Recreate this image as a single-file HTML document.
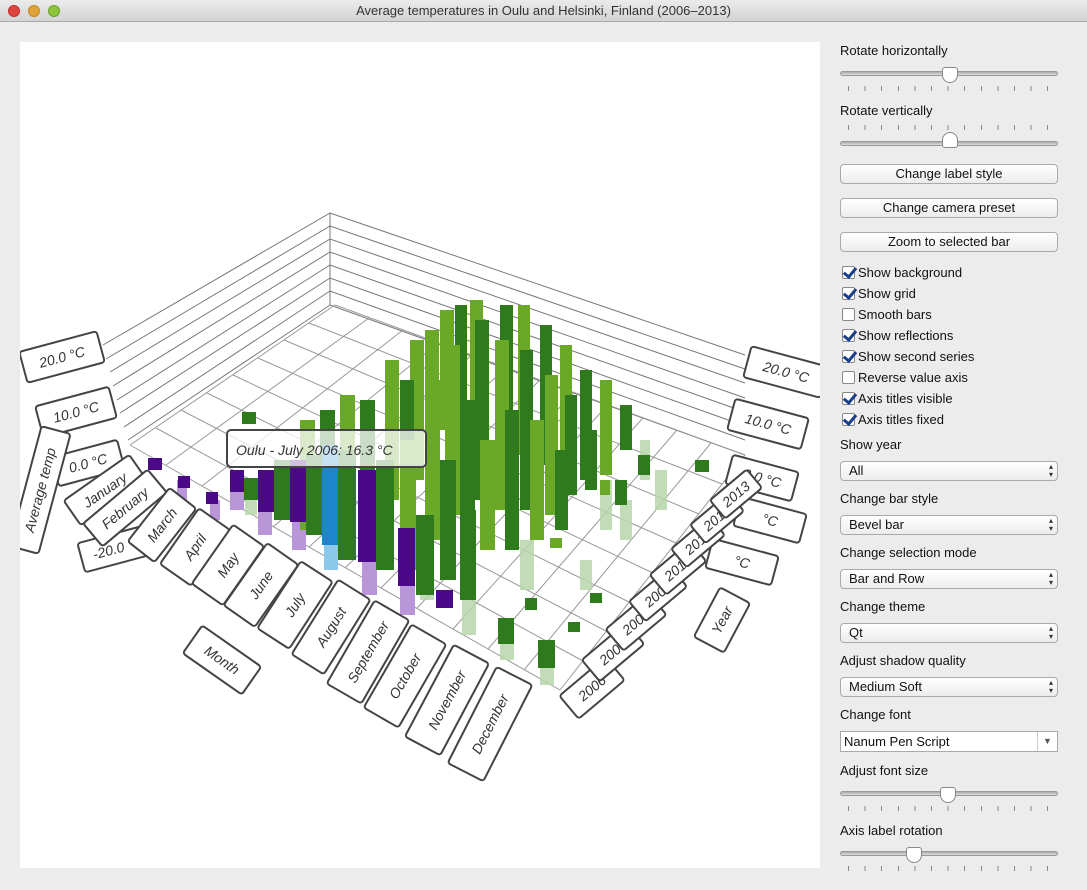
<!DOCTYPE html>
<html><head><meta charset="utf-8"><style>
*{margin:0;padding:0;box-sizing:border-box}
body{width:1087px;height:890px;background:#ececec;font-family:"Liberation Sans",sans-serif;position:relative;overflow:hidden;font-size:13px;color:#111}
.title{position:absolute;left:0;top:0;width:1087px;height:22px;background:linear-gradient(#ebebeb,#d3d3d3);border-bottom:1px solid #a9a9a9;text-align:center;line-height:22px;font-size:13px;color:#333}
.tl{position:absolute;top:5px;width:12px;height:12px;border-radius:50%}
.chart{position:absolute;left:20px;top:42px;width:800px;height:826px;background:#fff;overflow:hidden}
.lbl{position:absolute;left:840px;font-size:13px}
.slider{position:absolute;left:840px;width:218px;height:5px;border-radius:3px;background:linear-gradient(#aaa,#ddd);border:1px solid #999}
.ticks{position:absolute;left:848px;width:204px;height:5px;background:repeating-linear-gradient(90deg,#888 0 1px,transparent 1px 16.6px)}
.btn{position:absolute;left:840px;width:218px;height:20px;border:1px solid #aaa;border-radius:4px;background:linear-gradient(#fff,#ececec);text-align:center;line-height:18px;font-size:13px}
.cb{position:absolute;left:842px;font-size:13px;line-height:15px}
.cb i{display:inline-block;width:13px;height:13px;border:1px solid #888;border-radius:2px;background:#fff;vertical-align:-2px;margin-right:3px;position:relative}
.cb i.on::after{content:"";position:absolute;left:3px;top:-2px;width:5px;height:10px;border:solid #1a3f8a;border-width:0 3px 3px 0;transform:rotate(40deg)}
.sel{position:absolute;left:840px;width:218px;height:20px;border:1px solid #aaa;border-radius:4px;background:linear-gradient(#fff,#ececec);line-height:18px;padding-left:8px;font-size:13px}
.sel::after{content:"▴\A▾";white-space:pre;position:absolute;right:4px;top:1px;font-size:8px;line-height:8px;color:#333}
.hand{font-family:"Liberation Sans",sans-serif;font-style:italic;font-size:14px;fill:#333}
.L rect{fill:#fff;stroke:#444;stroke-width:2}
.L text{font-family:"Liberation Sans",sans-serif;font-style:italic;font-size:14px;fill:#333;text-anchor:middle;dominant-baseline:central}
</style></head><body>
<div class="title">Average temperatures in Oulu and Helsinki, Finland (2006–2013)</div>
<div class="tl" style="left:8px;background:#e0443e;border:1px solid #c0302a"></div>
<div class="tl" style="left:28px;background:#dea236;border:1px solid #c08a20"></div>
<div class="tl" style="left:48px;background:#8cc43a;border:1px solid #6aa02a"></div>

<div class="chart">
<svg width="800" height="826" viewBox="20 42 800 826" xmlns="http://www.w3.org/2000/svg">
<g stroke="#777" stroke-width="1" fill="none">
<path d="M103 345L330 213L745 355M106 359L330 226L745 369M110 372L330 239L745 383M113 386L330 252L745 398M117 400L330 265L745 412M120 413L330 278L745 426M124 427L330 291L745 440M128 440L330 305L745 455"/>
<path d="M330 213V305"/>
</g>
<g stroke="#999" stroke-width="1" fill="none">
<path d="M130 445L335 305M166 465L369 318M202 486L403 330M238 506L438 343M273 527L472 355M309 547L506 368M345 568L540 380M381 588L574 393M417 608L608 405M453 629L643 418M488 649L677 430M524 670L711 443M560 690L745 455"/>
<path d="M130 445L560 690M156 428L583 661M181 410L606 631M207 393L629 602M233 375L653 573M258 358L676 543M284 340L699 514M309 323L722 484M335 305L745 455"/>
</g>
<g fill="#b9d6ac" opacity="0.85">
<rect x="462" y="590" width="14" height="45"/><rect x="500" y="620" width="14" height="40"/><rect x="540" y="640" width="14" height="45"/>
<rect x="580" y="560" width="12" height="30"/><rect x="620" y="500" width="12" height="40"/><rect x="655" y="470" width="12" height="40"/>
<rect x="245" y="490" width="12" height="25"/><rect x="420" y="560" width="14" height="40"/><rect x="520" y="540" width="14" height="50"/>
<rect x="600" y="480" width="12" height="50"/><rect x="640" y="440" width="10" height="40"/>
</g>
<g fill="#b896d8"><rect x="230" y="490" width="14" height="20"/><rect x="258" y="510" width="14" height="25"/><rect x="292" y="520" width="14" height="30"/><rect x="362" y="560" width="15" height="35"/><rect x="400" y="585" width="15" height="30"/><rect x="177" y="480" width="10" height="30"/><rect x="210" y="500" width="10" height="20"/></g>
<rect x="324" y="545" width="14" height="25" fill="#8cc8ea"/>
<g>
<rect x="440" y="310" width="14" height="120" fill="#6aa828"/><rect x="455" y="305" width="12" height="130" fill="#2e7a1c"/>
<rect x="470" y="300" width="13" height="150" fill="#6aa828"/><rect x="500" y="305" width="13" height="150" fill="#2e7a1c"/>
<rect x="518" y="305" width="12" height="150" fill="#6aa828"/><rect x="540" y="325" width="12" height="140" fill="#2e7a1c"/>
<rect x="560" y="345" width="12" height="130" fill="#6aa828"/><rect x="580" y="370" width="12" height="110" fill="#2e7a1c"/>
<rect x="600" y="380" width="12" height="95" fill="#6aa828"/><rect x="620" y="405" width="12" height="45" fill="#2e7a1c"/>
<rect x="410" y="340" width="14" height="140" fill="#6aa828"/><rect x="425" y="330" width="14" height="150" fill="#6aa828"/>
<rect x="445" y="345" width="15" height="170" fill="#6aa828"/><rect x="475" y="320" width="14" height="180" fill="#2e7a1c"/>
<rect x="495" y="340" width="14" height="170" fill="#6aa828"/><rect x="520" y="350" width="13" height="160" fill="#2e7a1c"/>
<rect x="545" y="375" width="13" height="140" fill="#6aa828"/><rect x="565" y="395" width="12" height="100" fill="#2e7a1c"/>
<rect x="385" y="360" width="14" height="140" fill="#6aa828"/><rect x="400" y="380" width="14" height="140" fill="#2e7a1c"/>
<rect x="425" y="380" width="15" height="160" fill="#6aa828"/><rect x="460" y="400" width="15" height="150" fill="#2e7a1c"/>
<rect x="480" y="440" width="15" height="110" fill="#6aa828"/><rect x="505" y="410" width="14" height="140" fill="#2e7a1c"/>
<rect x="530" y="420" width="14" height="120" fill="#6aa828"/><rect x="555" y="450" width="13" height="80" fill="#2e7a1c"/>
<rect x="340" y="395" width="15" height="140" fill="#6aa828"/><rect x="360" y="400" width="15" height="140" fill="#2e7a1c"/>
<rect x="300" y="420" width="15" height="110" fill="#6aa828"/><rect x="320" y="410" width="15" height="120" fill="#2e7a1c"/>
<rect x="400" y="440" width="16" height="130" fill="#6aa828"/><rect x="440" y="460" width="16" height="120" fill="#2e7a1c"/>
<rect x="585" y="430" width="12" height="60" fill="#2e7a1c"/><rect x="615" y="480" width="12" height="25" fill="#2e7a1c"/>
<rect x="638" y="455" width="12" height="20" fill="#2e7a1c"/><rect x="695" y="460" width="14" height="12" fill="#2e7a1c"/>
<rect x="600" y="480" width="10" height="15" fill="#6aa828"/><rect x="550" y="538" width="12" height="10" fill="#6aa828"/>
<rect x="590" y="593" width="12" height="10" fill="#2e7a1c"/><rect x="568" y="622" width="12" height="10" fill="#2e7a1c"/>
<rect x="525" y="598" width="12" height="12" fill="#2e7a1c"/><rect x="242" y="412" width="14" height="12" fill="#2e7a1c"/>
</g>
<g>
<rect x="230" y="470" width="14" height="22" fill="#4a0a88"/><rect x="244" y="478" width="14" height="22" fill="#2e7a1c"/>
<rect x="258" y="470" width="16" height="42" fill="#4a0a88"/><rect x="274" y="460" width="16" height="60" fill="#2e7a1c"/>
<rect x="290" y="460" width="16" height="62" fill="#4a0a88"/><rect x="306" y="455" width="16" height="80" fill="#2e7a1c"/>
<rect x="322" y="445" width="16" height="100" fill="#1b86cc"/><rect x="338" y="450" width="18" height="110" fill="#2e7a1c"/>
<rect x="358" y="470" width="18" height="92" fill="#4a0a88"/><rect x="376" y="460" width="18" height="110" fill="#2e7a1c"/>
<rect x="398" y="528" width="17" height="58" fill="#4a0a88"/><rect x="416" y="515" width="18" height="80" fill="#2e7a1c"/>
<rect x="436" y="590" width="17" height="18" fill="#4a0a88"/><rect x="460" y="510" width="16" height="90" fill="#2e7a1c"/>
<rect x="498" y="618" width="16" height="26" fill="#2e7a1c"/><rect x="538" y="640" width="17" height="28" fill="#2e7a1c"/>
<rect x="148" y="458" width="14" height="12" fill="#4a0a88"/><rect x="178" y="476" width="12" height="12" fill="#4a0a88"/><rect x="206" y="492" width="12" height="12" fill="#4a0a88"/>
</g>
<rect x="227" y="430" width="199" height="37" rx="4" fill="#fff" fill-opacity="0.75" stroke="#444" stroke-width="2"/>
<text x="236" y="455" class="hand" font-size="15">Oulu - July 2006: 16.3 °C</text>
<g class="L">
<g transform="translate(62,357) rotate(-15)"><rect x="-40" y="-16" width="80" height="32" rx="3"/><text>20.0 °C</text></g>
<g transform="translate(76,412) rotate(-15)"><rect x="-38" y="-16" width="76" height="32" rx="3"/><text>10.0 °C</text></g>
<g transform="translate(88,463) rotate(-15)"><rect x="-34" y="-15" width="68" height="30" rx="3"/><text>0.0 °C</text></g>
<g transform="translate(118,548) rotate(-15)"><rect x="-38" y="-15" width="76" height="30" rx="3"/><text>-20.0 °C</text></g>
<g transform="translate(786,372) rotate(15)"><rect x="-40" y="-16" width="80" height="32" rx="3"/><text>20.0 °C</text></g>
<g transform="translate(768,424) rotate(15)"><rect x="-38" y="-16" width="76" height="32" rx="3"/><text>10.0 °C</text></g>
<g transform="translate(762,478) rotate(15)"><rect x="-34" y="-15" width="68" height="30" rx="3"/><text>0.0 °C</text></g>
<g transform="translate(770,520) rotate(15)"><rect x="-34" y="-15" width="68" height="30" rx="3"/><text>°C</text></g>
<g transform="translate(742,562) rotate(15)"><rect x="-34" y="-15" width="68" height="30" rx="3"/><text>°C</text></g>
<g transform="translate(40,490) rotate(-75)"><rect x="-62" y="-15" width="124" height="30" rx="3"/><text>Average temp</text></g>
<g transform="translate(105,490) rotate(-35)"><rect x="-40" y="-15" width="80" height="30" rx="3"/><text>January</text></g>
<g transform="translate(125,508) rotate(-40)"><rect x="-42" y="-15" width="84" height="30" rx="3"/><text>February</text></g>
<g transform="translate(162,525) rotate(-52)"><rect x="-34" y="-17" width="68" height="34" rx="3"/><text>March</text></g>
<g transform="translate(195,547) rotate(-55)"><rect x="-34" y="-19" width="68" height="38" rx="3"/><text>April</text></g>
<g transform="translate(228,565) rotate(-55)"><rect x="-36" y="-19" width="72" height="38" rx="3"/><text>May</text></g>
<g transform="translate(261,585) rotate(-55)"><rect x="-38" y="-19" width="76" height="38" rx="3"/><text>June</text></g>
<g transform="translate(295,605) rotate(-57)"><rect x="-40" y="-19" width="80" height="38" rx="3"/><text>July</text></g>
<g transform="translate(331,627) rotate(-58)"><rect x="-44" y="-19" width="88" height="38" rx="3"/><text>August</text></g>
<g transform="translate(368,652) rotate(-60)"><rect x="-48" y="-20" width="96" height="40" rx="3"/><text>September</text></g>
<g transform="translate(405,676) rotate(-60)"><rect x="-48" y="-20" width="96" height="40" rx="3"/><text>October</text></g>
<g transform="translate(447,700) rotate(-62)"><rect x="-52" y="-20" width="104" height="40" rx="3"/><text>November</text></g>
<g transform="translate(490,724) rotate(-63)"><rect x="-54" y="-20" width="108" height="40" rx="3"/><text>December</text></g>
<g transform="translate(222,660) rotate(35)"><rect x="-36" y="-17" width="72" height="34" rx="3"/><text>Month</text></g>
<g transform="translate(592,688) rotate(-40)"><rect x="-30" y="-15" width="60" height="30" rx="3"/><text>2006</text></g>
<g transform="translate(613,652) rotate(-40)"><rect x="-29" y="-14" width="58" height="28" rx="3"/><text>2007</text></g>
<g transform="translate(636,622) rotate(-40)"><rect x="-28" y="-14" width="56" height="28" rx="3"/><text>2008</text></g>
<g transform="translate(658,594) rotate(-40)"><rect x="-27" y="-13" width="54" height="26" rx="3"/><text>2009</text></g>
<g transform="translate(678,568) rotate(-40)"><rect x="-26" y="-13" width="52" height="26" rx="3"/><text>2010</text></g>
<g transform="translate(698,542) rotate(-40)"><rect x="-25" y="-12" width="50" height="24" rx="3"/><text>2011</text></g>
<g transform="translate(717,518) rotate(-40)"><rect x="-25" y="-12" width="50" height="24" rx="3"/><text>2012</text></g>
<g transform="translate(736,494) rotate(-40)"><rect x="-24" y="-12" width="48" height="24" rx="3"/><text>2013</text></g>
<g transform="translate(722,620) rotate(-62)"><rect x="-28" y="-17" width="56" height="34" rx="3"/><text>Year</text></g>
</g>
</svg>
</div>

<div class="lbl" style="top:43px">Rotate horizontally</div>
<div class="slider" style="top:71px"></div>
<div class="ticks" style="top:86px"></div>
<div style="position:absolute;left:942px;top:67px;width:16px;height:16px;background:#fff;border:1px solid #888;border-radius:3px 3px 8px 8px"></div>
<div class="lbl" style="top:103px">Rotate vertically</div>
<div class="ticks" style="top:125px"></div>
<div class="slider" style="top:141px"></div>
<div style="position:absolute;left:942px;top:132px;width:16px;height:16px;background:#fff;border:1px solid #888;border-radius:8px 8px 3px 3px"></div>
<div class="btn" style="top:164px">Change label style</div>
<div class="btn" style="top:198px">Change camera preset</div>
<div class="btn" style="top:232px">Zoom to selected bar</div>
<div class="cb" style="top:265px"><i class="on"></i>Show background</div>
<div class="cb" style="top:286px"><i class="on"></i>Show grid</div>
<div class="cb" style="top:307px"><i></i>Smooth bars</div>
<div class="cb" style="top:328px"><i class="on"></i>Show reflections</div>
<div class="cb" style="top:349px"><i class="on"></i>Show second series</div>
<div class="cb" style="top:370px"><i></i>Reverse value axis</div>
<div class="cb" style="top:391px"><i class="on"></i>Axis titles visible</div>
<div class="cb" style="top:412px"><i class="on"></i>Axis titles fixed</div>
<div class="lbl" style="top:437px">Show year</div>
<div class="sel" style="top:461px">All</div>
<div class="lbl" style="top:491px">Change bar style</div>
<div class="sel" style="top:515px">Bevel bar</div>
<div class="lbl" style="top:545px">Change selection mode</div>
<div class="sel" style="top:569px">Bar and Row</div>
<div class="lbl" style="top:599px">Change theme</div>
<div class="sel" style="top:623px">Qt</div>
<div class="lbl" style="top:653px">Adjust shadow quality</div>
<div class="sel" style="top:677px">Medium Soft</div>
<div class="lbl" style="top:707px">Change font</div>
<div style="position:absolute;left:840px;top:731px;width:218px;height:21px;background:#fff;border:1px solid #aaa;line-height:19px;padding-left:3px">Nanum Pen Script<span style="position:absolute;right:0;top:0;width:20px;height:19px;border-left:1px solid #ccc;text-align:center;font-size:9px;color:#555">▼</span></div>
<div class="lbl" style="top:763px">Adjust font size</div>
<div class="slider" style="top:791px"></div>
<div class="ticks" style="top:806px"></div>
<div style="position:absolute;left:940px;top:787px;width:16px;height:16px;background:#fff;border:1px solid #888;border-radius:3px 3px 8px 8px"></div>
<div class="lbl" style="top:823px">Axis label rotation</div>
<div class="slider" style="top:851px"></div>
<div class="ticks" style="top:866px"></div>
<div style="position:absolute;left:906px;top:847px;width:16px;height:16px;background:#fff;border:1px solid #888;border-radius:3px 3px 8px 8px"></div>
</body></html>
